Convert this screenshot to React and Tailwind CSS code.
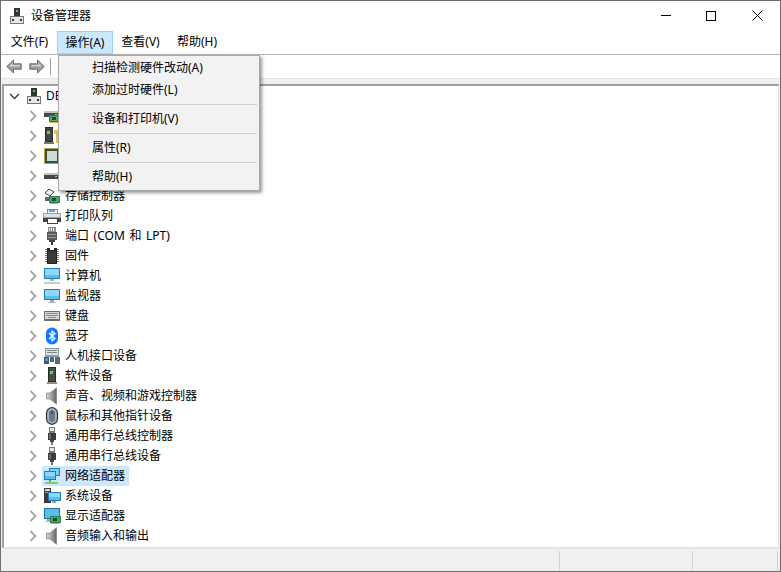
import React from "react";

const S = ({ children, w = 18, h = 18 }) => (
  <svg width={w} height={h} viewBox={`0 0 ${w} ${h}`} className="shrink-0 block" shapeRendering="crispEdges">{children}</svg>
);

const Monitor = ({ x = 1, y = 2, w = 16, h = 11, stand = true }) => (
  <g>
    <rect x={x} y={y} width={w} height={h} fill="#1f7fb5" />
    <rect x={x + 1} y={y + 1} width={w - 2} height={h - 2} fill="#8fd6f7" />
    <rect x={x + 1} y={y + h - 4} width={w - 2} height={3} fill="#5cbcec" />
    {stand && <rect x={x + w / 2 - 2} y={y + h} width={4} height={2} fill="#9aa4ab" />}
    {stand && <rect x={x + w / 2 - 4} y={y + h + 2} width={8} height={1} fill="#b8c0c6" />}
  </g>
);

const Card = ({ x = 6, y = 9 }) => (
  <g>
    <rect x={x} y={y} width={11} height={7} fill="#2f7f4f" />
    <rect x={x + 1} y={y + 1} width={9} height={5} fill="#4aa36c" />
    <rect x={x + 3} y={y + 2} width={4} height={3} fill="#174d2c" />
    <rect x={x + 1} y={y + 7} width={8} height={1} fill="#e0a92e" />
  </g>
);

const Disk = ({ y = 7 }) => (
  <g>
    <rect x="1" y={y} width="15" height="2" fill="#c4c4c4" />
    <rect x="1" y={y + 2} width="15" height="4" fill="#474747" />
    <rect x="12" y={y + 3} width="2" height="1" fill="#7fe07f" />
  </g>
);

const Speaker = ({ id }) => (
  <svg width="18" height="18" viewBox="0 0 18 18" className="shrink-0 block">
    <defs>
      <linearGradient id={id} x1="0" x2="1">
        <stop offset="0" stopColor="#d8d8d8" />
        <stop offset="1" stopColor="#666666" />
      </linearGradient>
    </defs>
    <path d="M3.500 6h3.500L13.500 .7v16.600L7 12H3.500z" fill={`url(#${id})`} stroke="#808080" strokeWidth=".7" />
  </svg>
);

const Usb = () => (
  <S>
    <rect x="6" y="0" width="6" height="6" fill="#777" />
    <rect x="7" y="1" width="4" height="3" fill="#e6e6e6" />
    <rect x="5" y="6" width="8" height="7" fill="#3c3c3c" />
    <rect x="6" y="7" width="2" height="5" fill="#6b6b6b" />
    <rect x="7" y="13" width="4" height="2" fill="#444" />
    <rect x="8" y="15" width="2" height="3" fill="#777" />
  </S>
);

const Tower = () => (
  <S>
    <rect x="5" y="0" width="8" height="15" fill="#2b2b2b" />
    <rect x="6" y="1" width="6" height="13" fill="#4a4a4a" />
    <rect x="7" y="4" width="3" height="3" fill="#44e05a" />
    <rect x="4" y="15" width="10" height="2" fill="#8f8f8f" />
  </S>
);

const pins = [2, 4, 6, 8, 10, 12, 14];

const icons = {
  disk: <S><Disk y={4} /><Card x={6} y={8} /></S>,
  key: (
    <S>
      <rect x="2" y="0" width="8" height="15" fill="#2b2b2b" />
      <rect x="3" y="1" width="6" height="13" fill="#444" />
      <rect x="4" y="4" width="3" height="3" fill="#44e05a" />
      <rect x="1" y="15" width="10" height="2" fill="#777" />
      <rect x="11" y="3" width="5" height="4" fill="#e5b95f" />
      <rect x="13" y="7" width="2" height="9" fill="#e5b95f" />
    </S>
  ),
  cpu: (
    <S>
      <rect x="1" y="1" width="16" height="16" fill="#c99f36" />
      <rect x="2" y="2" width="14" height="14" fill="#24594a" />
      <rect x="4" y="4" width="10" height="10" fill="#cfdcd5" />
    </S>
  ),
  hdd: <S><Disk y={6} /></S>,
  storage: (
    <S>
      <path d="M2 6l4-4 5 3-4 4z" fill="#f4f4f4" stroke="#444" shapeRendering="auto" />
      <rect x="2" y="10" width="6" height="4" fill="#666" />
      <Card x={6} y={9} />
    </S>
  ),
  printer: (
    <S>
      <rect x="4" y="2" width="10" height="4" fill="#f5f5f5" stroke="#888" />
      <rect x="6" y="3" width="6" height="2" fill="#4ab3e8" />
      <rect x="0" y="6" width="18" height="6" fill="#a0a0a0" />
      <rect x="1" y="7" width="16" height="3" fill="#e2e2e2" />
      <rect x="0" y="11" width="4" height="4" fill="#444" />
      <rect x="14" y="11" width="4" height="4" fill="#444" />
      <rect x="4" y="11" width="10" height="5" fill="#fff" stroke="#444" />
    </S>
  ),
  port: (
    <S>
      <rect x="5" y="0" width="8" height="5" fill="#8a8a8a" />
      <rect x="6" y="1" width="1" height="3" fill="#e8e8e8" />
      <rect x="8" y="1" width="1" height="3" fill="#e8e8e8" />
      <rect x="10" y="1" width="1" height="3" fill="#e8e8e8" />
      <rect x="4" y="5" width="10" height="8" fill="#5a5a5a" />
      <rect x="5" y="7" width="8" height="1" fill="#999" />
      <rect x="5" y="10" width="8" height="1" fill="#999" />
      <rect x="6" y="13" width="6" height="2" fill="#444" />
      <rect x="8" y="15" width="2" height="3" fill="#333" />
    </S>
  ),
  firmware: (
    <S>
      {pins.map((y) => (
        <g key={y}>
          <rect x="2" y={y} width="2" height="1" fill="#777" />
          <rect x="14" y={y} width="2" height="1" fill="#777" />
        </g>
      ))}
      <rect x="4" y="1" width="10" height="16" fill="#222" />
      <rect x="7" y="1" width="4" height="2" fill="#fff" />
      <rect x="5" y="4" width="8" height="12" fill="#3a3a3a" />
    </S>
  ),
  computer: (
    <S>
      <Monitor x={1} y={1} w={16} h={11} stand={false} />
      <rect x="7" y="12" width="4" height="2" fill="#aab2b8" />
      <rect x="1" y="15" width="16" height="2" fill="#c4ccd2" />
    </S>
  ),
  monitor: <S><Monitor x={1} y={2} w={16} h={11} /></S>,
  keyboard: (
    <S>
      <rect x="1" y="4" width="16" height="10" fill="#6e6e6e" />
      <rect x="2" y="5" width="14" height="7" fill="#d6d6d6" />
      <rect x="3" y="6" width="12" height="1" fill="#8d8d8d" />
      <rect x="3" y="8" width="12" height="1" fill="#8d8d8d" />
      <rect x="5" y="10" width="8" height="1" fill="#8d8d8d" />
    </S>
  ),
  bluetooth: (
    <svg width="18" height="18" viewBox="0 0 18 18" className="shrink-0 block">
      <rect x="3" y="0.500" width="12" height="17" rx="6" fill="#0a78ff" />
      <path d="M6 6l6 5.500L9 14V4l3 2.500L6 12" fill="none" stroke="#fff" strokeWidth="1.200" />
    </svg>
  ),
  hid: (
    <S>
      <rect x="2" y="1" width="14" height="9" fill="#8f9aa3" />
      <rect x="3" y="2" width="12" height="6" fill="#dfe3e6" />
      <rect x="4" y="3" width="10" height="1" fill="#7d8890" />
      <rect x="4" y="5" width="10" height="1" fill="#7d8890" />
      <rect x="1" y="10" width="5" height="7" fill="#555" />
      <rect x="2" y="11" width="3" height="3" fill="#4b8fd0" />
      <rect x="7" y="10" width="4" height="5" fill="#2f6fb0" />
      <rect x="12" y="10" width="5" height="7" fill="#666" />
    </S>
  ),
  software: <Tower />,
  speaker1: <Speaker id="spk1" />,
  speaker2: <Speaker id="spk2" />,
  mouse: (
    <svg width="18" height="18" viewBox="0 0 18 18" className="shrink-0 block">
      <rect x="3.500" y="0.700" width="11" height="16.600" rx="5.500" fill="#a9b3bc" stroke="#2f2f2f" strokeWidth="1.200" />
      <rect x="6" y="3" width="6" height="12" rx="3" fill="#6d7b88" />
      <rect x="8" y="4" width="2" height="3" fill="#3f4a54" />
    </svg>
  ),
  usb: <Usb />,
  network: (
    <S>
      <rect x="6" y="1" width="11" height="8" fill="#1f7fb5" />
      <rect x="7" y="2" width="9" height="6" fill="#7ccdf4" />
      <rect x="1" y="4" width="12" height="9" fill="#1f7fb5" />
      <rect x="2" y="5" width="10" height="7" fill="#8fd6f7" />
      <rect x="2" y="9" width="10" height="3" fill="#5cbcec" />
      <rect x="6" y="13" width="2" height="2" fill="#58b948" />
      <rect x="2" y="15" width="13" height="2" fill="#7ccb6a" />
    </S>
  ),
  system: (
    <S>
      <rect x="1" y="1" width="7" height="15" fill="#3a3a3a" />
      <rect x="2" y="2" width="5" height="2" fill="#d9d9d9" />
      <rect x="2" y="5" width="5" height="1" fill="#9a9a9a" />
      <Monitor x={5} y={5} w={13} h={9} stand={false} />
      <rect x="9" y="14" width="4" height="2" fill="#9aa4ab" />
    </S>
  ),
  display: (
    <S>
      <rect x="1" y="1" width="16" height="11" fill="#1f6f9f" />
      <rect x="2" y="2" width="14" height="9" fill="#5cbcec" />
      <rect x="4" y="12" width="4" height="2" fill="#9aa4ab" />
      <rect x="2" y="14" width="6" height="1" fill="#b8c0c6" />
      <Card x={7} y={9} />
    </S>
  ),
};

const ChevRight = () => (
  <svg width="8" height="12" viewBox="0 0 8 12" className="block shrink-0">
    <path d="M1.500 1L6.500 6l-5 5" fill="none" stroke="#a6a6a6" strokeWidth="1.800" />
  </svg>
);

const ChevDown = () => (
  <svg width="11" height="7" viewBox="0 0 11 7" className="block shrink-0 mt-[1px]">
    <path d="M1 1l4.500 4.500L10 1" fill="none" stroke="#404040" strokeWidth="1.500" />
  </svg>
);

const DevMgr = () => (
  <svg width="14" height="16" viewBox="0 0 14 16" className="block shrink-0" shapeRendering="crispEdges">
    <rect x="4" y="0" width="6" height="9" fill="#333" />
    <rect x="6" y="2" width="2" height="2" fill="#35d35a" />
    <rect x="0" y="8" width="14" height="8" fill="#777" />
    <rect x="1" y="9" width="12" height="6" fill="#e8e8e8" />
    <rect x="2" y="11" width="2" height="2" fill="#333" />
    <rect x="10" y="11" width="2" height="2" fill="#333" />
  </svg>
);

const Arrow = ({ flip }) => (
  <svg width="16" height="15" viewBox="0 0 16 15" className={flip ? "block shrink-0 -scale-x-100" : "block shrink-0"}>
    <path d="M.8 7.500L7.500 1v3.800h7.700v5.400H7.500V14z" fill="#9c9c9c" stroke="#6f6f6f" strokeWidth="1" />
    <path d="M3 7.500L6.500 4v2h7v1.500h-10z" fill="#d4d4d4" />
  </svg>
);

const rows = [
  ["disk", ""],
  ["key", ""],
  ["cpu", ""],
  ["hdd", ""],
  ["storage", "存储控制器"],
  ["printer", "打印队列"],
  ["port", "端口 (COM 和 LPT)"],
  ["firmware", "固件"],
  ["computer", "计算机"],
  ["monitor", "监视器"],
  ["keyboard", "键盘"],
  ["bluetooth", "蓝牙"],
  ["hid", "人机接口设备"],
  ["software", "软件设备"],
  ["speaker1", "声音、视频和游戏控制器"],
  ["mouse", "鼠标和其他指针设备"],
  ["usb", "通用串行总线控制器"],
  ["usb", "通用串行总线设备"],
  ["network", "网络适配器", true],
  ["system", "系统设备"],
  ["display", "显示适配器"],
  ["speaker2", "音频输入和输出"],
];

const MenuItem = ({ children }) => (
  <div className="h-[22px] pl-[33px] flex items-center">{children}</div>
);
const MenuSep = () => (
  <div className="h-[7px] flex items-center pl-[29px] pr-[2px]">
    <div className="h-px w-full bg-[#d0d0d0]" />
  </div>
);

export default function App() {
  return (
    <div
      className="relative w-[781px] h-[572px] border border-[#6e6e6e] bg-white flex flex-col overflow-hidden text-[12px] leading-none text-black [word-spacing:1.5px]"
      style={{ fontFamily: '"Noto Sans", "Noto Sans CJK SC", sans-serif' }}
    >
      {/* Title bar */}
      <div className="h-[29px] shrink-0 flex items-center pl-[9px] pr-[17px]">
        <DevMgr />
        <span className="ml-[7px]">设备管理器</span>
        <div className="ml-auto flex items-center">
          <div className="w-[10px] h-px bg-black" />
          <div className="ml-[35px] w-[10px] h-[10px] border border-black" />
          <svg width="11" height="11" viewBox="0 0 11 11" className="ml-[36px] block">
            <path d="M.5.5l10 10M10.500.5l-10 10" stroke="#000" strokeWidth="1" />
          </svg>
        </div>
      </div>

      {/* Menu bar */}
      <div className="h-[25px] shrink-0 border-b border-[#b4b4b4] flex items-start pt-[1px] pl-[1px]">
        <div className="h-[22px] w-[55px] flex items-center justify-center">文件(F)</div>
        <div className="h-[23px] w-[56px] flex items-center justify-center border border-[#99d1ff] bg-[#cce8ff]">操作(A)</div>
        <div className="h-[22px] w-[55px] flex items-center justify-center">查看(V)</div>
        <div className="h-[22px] w-[58px] flex items-center justify-center">帮助(H)</div>
      </div>

      {/* Toolbar */}
      <div className="h-[23px] shrink-0 flex items-center pl-[5px]">
        <Arrow />
        <div className="ml-[7px]"><Arrow flip /></div>
        <div className="ml-[5px] w-px h-[17px] bg-[#a0a0a0]" />
      </div>

      {/* Gray strip */}
      <div className="h-[6px] shrink-0 bg-[#f0f0f0] border-t border-[#e3e3e3]" />

      {/* Tree */}
      <div className="flex-1 min-h-0 bg-[#f0f0f0] pl-[1px] pr-[1px]">
        <div className="h-full bg-white border-t-2 border-l-2 border-t-[#a0a0a0] border-l-[#a0a0a0] border-r border-b border-r-[#e3e3e3] border-b-[#e3e3e3] overflow-hidden">
          <div className="h-5 flex items-center pl-[5px] whitespace-nowrap">
            <ChevDown />
            <div className="ml-[7px]"><DevMgr /></div>
            <span className="ml-[5px]">DE</span>
          </div>
          {rows.map(([icon, label, sel], i) => (
            <div key={i} className="h-5 flex items-center pl-[25px] whitespace-nowrap">
              <ChevRight />
              <div className={sel ? "ml-[5px] h-5 pl-[1px] pr-[4px] flex items-center gap-[4px] bg-[#cce8ff]" : "ml-[5px] h-5 pl-[1px] pr-[4px] flex items-center gap-[4px]"}>
                {icons[icon]}
                {label && <span>{label}</span>}
              </div>
            </div>
          ))}
        </div>
      </div>

      {/* Status bar */}
      <div className="h-[23px] shrink-0 bg-[#f0f0f0] border-t border-[#e3e3e3] flex items-stretch pt-[2px]">
        <div className="w-[559px] border-r border-[#d4d4d4]" />
        <div className="w-[133px] border-r border-[#d4d4d4]" />
        <div className="w-[85px] border-r border-[#d4d4d4]" />
      </div>

      {/* Dropdown menu */}
      <div className="absolute left-[57px] top-[54px] w-[202px] h-[136px] pt-[1px] bg-[#f2f2f2] border border-[#a8a8a8] shadow-[2px_2px_3px_rgba(0,0,0,0.4)]">
        <MenuItem>扫描检测硬件改动(A)</MenuItem>
        <MenuItem>添加过时硬件(L)</MenuItem>
        <MenuSep />
        <MenuItem>设备和打印机(V)</MenuItem>
        <MenuSep />
        <MenuItem>属性(R)</MenuItem>
        <MenuSep />
        <MenuItem>帮助(H)</MenuItem>
      </div>
    </div>
  );
}
